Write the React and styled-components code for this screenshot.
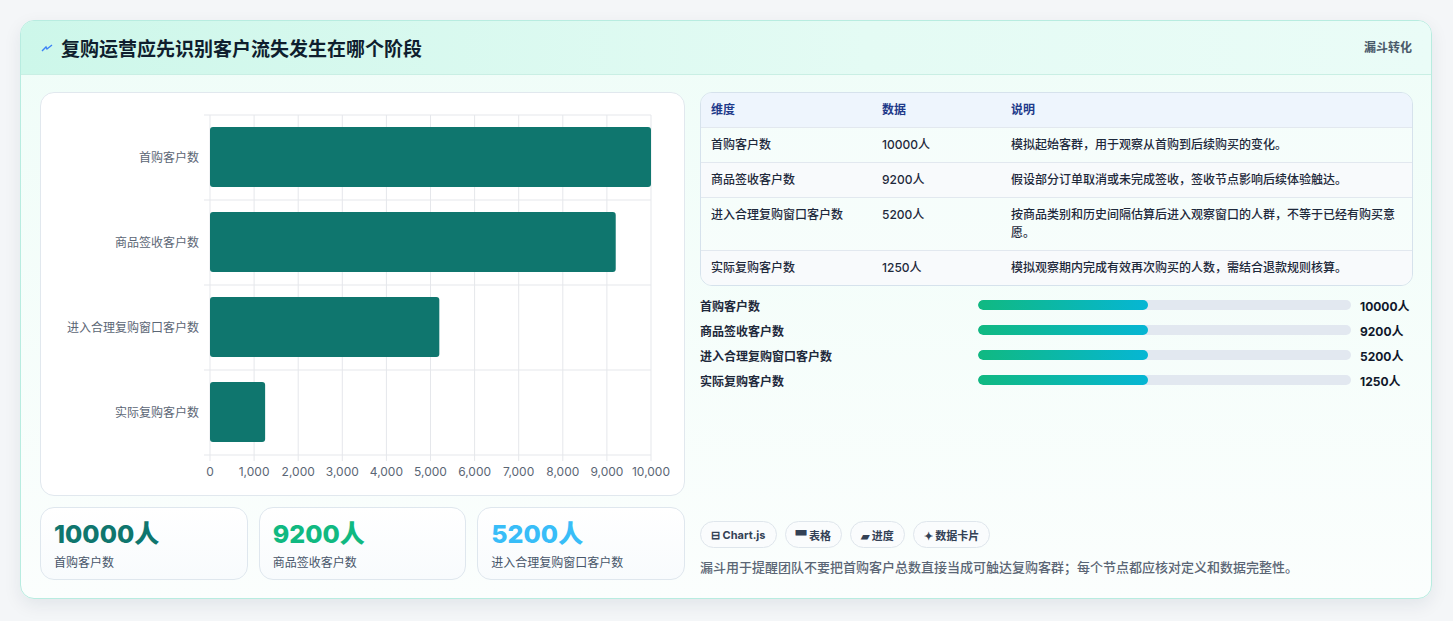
import React from 'react';
import styled, { createGlobalStyle } from 'styled-components';

const Global = createGlobalStyle`
  body { margin: 0; background: #f4f6f8; font-family: Inter, "Noto Sans CJK SC", sans-serif; }
`;

const Page = styled.div`
  padding: 20px 21px 22px 20px;
  height: 621px;
  box-sizing: border-box;
`;

const Card = styled.div`
  height: 579px;
  box-sizing: border-box;
  border: 1px solid #b8ece0;
  border-radius: 14px;
  background: linear-gradient(180deg, #effdf8 0%, #fbfefd 100%);
  box-shadow: 0 6px 18px rgba(15, 40, 60, 0.08);
  overflow: hidden;
  display: flex;
  flex-direction: column;
`;

const Header = styled.div`
  height: 55px;
  box-sizing: border-box;
  background: linear-gradient(90deg, #cdf7ea, #e4fbf4 60%, #eafcf7);
  border-bottom: 1px solid #c9efe4;
  display: flex;
  align-items: center;
  justify-content: space-between;
  padding: 0 19px 0 20px;
`;

const Title = styled.h1`
  margin: 0;
  font-size: 19px;
  font-weight: 700;
  color: #0f1e2e;
  display: flex;
  align-items: center;
  gap: 8px;
`;

const Badge = styled.span`
  font-size: 12px;
  font-weight: 700;
  color: #4a5a6a;
  align-self: flex-start;
  margin-top: 17px;
`;

const Body = styled.div`
  flex: 1;
  display: grid;
  grid-template-columns: 645px 713px;
  gap: 15px;
  padding: 17px 19px 18px 19px;
`;

const Col = styled.div`
  display: flex;
  flex-direction: column;
  gap: 11px;
`;

const ChartBox = styled.div`
  height: 404px;
  box-sizing: border-box;
  background: #fff;
  border: 1px solid #e1e8ee;
  border-radius: 14px;
`;

const Kpis = styled.div`
  display: grid;
  grid-template-columns: repeat(3, 1fr);
  gap: 11px;
`;

const Kpi = styled.div`
  height: 73px;
  box-sizing: border-box;
  border: 1px solid #dfe7ee;
  border-radius: 14px;
  background: linear-gradient(180deg, #fff, #f8fbfd);
  padding: 10px 13px;
`;

const KpiValue = styled.div`
  font-size: 25px;
  font-weight: 800;
  color: ${p => p.color};
  line-height: 32px;
`;

const KpiLabel = styled.div`
  font-size: 12px;
  color: #475569;
  margin-top: 3px;
`;

const Table = styled.div`
  border: 1px solid #d6e2ec;
  border-radius: 12px;
  overflow: hidden;
  font-size: 12px;
  color: #1e293b;
`;

const Row = styled.div`
  display: grid;
  grid-template-columns: 171px 129px 1fr;
  padding: 0 10px;
  align-items: center;
  min-height: 34px;
  border-top: ${p => (p.head ? 'none' : '1px solid #e2e8ef')};
  background: ${p => (p.head ? '#eef5fd' : p.alt ? '#f8fafc' : 'rgba(255,255,255,0.3)')};
  color: ${p => (p.head ? '#1e3a8a' : '#1e293b')};
  font-weight: ${p => (p.head ? 700 : 500)};
  line-height: 18px;
  & > span { padding: ${p => (p.tall ? '8px 0' : '0')}; align-self: ${p => (p.tall ? 'start' : 'center')}; }
`;

const Bars = styled.div`
  display: flex;
  flex-direction: column;
  gap: 7px;
  margin-top: 10px;
`;

const BarRow = styled.div`
  display: grid;
  grid-template-columns: 269px 373px 1fr;
  align-items: center;
  gap: 0 9px;
  font-size: 12px;
  font-weight: 600;
  color: #1e293b;
  height: 18px;
`;

const Track = styled.div`
  height: 10px;
  border-radius: 5px;
  background: #e2e8f0;
  overflow: hidden;
`;

const Fill = styled.div`
  height: 100%;
  border-radius: 5px;
  background: linear-gradient(90deg, #10b981, #06b6d4);
`;

const Val = styled.span`
  font-weight: 700;
  color: #0f172a;
`;

const Spacer = styled.div`
  flex: 1;
`;

const Tags = styled.div`
  display: flex;
  gap: 8px;
`;

const Tag = styled.span`
  height: 27px;
  box-sizing: border-box;
  padding: 0 10px;
  border: 1px solid #dfe6ec;
  border-radius: 14px;
  background: #fafcfd;
  font-size: 11px;
  font-weight: 700;
  color: #334155;
  display: flex;
  align-items: center;
  gap: 4px;
`;

const Note = styled.p`
  margin: 9px 0 4px;
  font-size: 13px;
  font-weight: 500;
  color: #5b6675;
`;

const data = [
  { name: '首购客户数', v: 10000, desc: '模拟起始客群，用于观察从首购到后续购买的变化。' },
  { name: '商品签收客户数', v: 9200, desc: '假设部分订单取消或未完成签收，签收节点影响后续体验触达。' },
  { name: '进入合理复购窗口客户数', v: 5200, desc: '按商品类别和历史间隔估算后进入观察窗口的人群，不等于已经有购买意愿。' },
  { name: '实际复购客户数', v: 1250, desc: '模拟观察期内完成有效再次购买的人数，需结合退款规则核算。' },
];

const Chart = () => {
  const x0 = 169, x1 = 610, y0 = 22, band = 85;
  const sx = v => x0 + ((x1 - x0) * v) / 10000;
  return (
    <svg width="643" height="402" style={{ display: 'block' }}>
      {Array.from({ length: 11 }, (_, i) => (
        <g key={i}>
          <line x1={sx(i * 1000)} x2={sx(i * 1000)} y1={y0} y2={y0 + band * 4 + 6} stroke="#e5e7eb" />
          <text x={sx(i * 1000)} y={383} fontSize="12" fill="#5b6675" textAnchor="middle" fontFamily="Inter, sans-serif">
            {i === 0 ? '0' : (i * 1000).toLocaleString('en-US')}
          </text>
        </g>
      ))}
      {[0, 1, 2, 3, 4].map(i => (
        <line key={i} x1={x0 - 6} x2={x1} y1={y0 + i * band} y2={y0 + i * band} stroke="#e5e7eb" />
      ))}
      {data.map((d, i) => (
        <g key={d.name}>
          <rect x={x0} y={y0 + i * band + 12} width={sx(d.v) - x0} height={60} rx="3" fill="#0f766e" />
          <text x={x0 - 11} y={y0 + i * band + 47} fontSize="12" fill="#5b6675" textAnchor="end" fontFamily="Inter, 'Noto Sans CJK SC', sans-serif">
            {d.name}
          </text>
        </g>
      ))}
    </svg>
  );
};

export default function App() {
  return (
    <Page>
      <Global />
      <Card>
        <Header>
          <Title>
            <svg width="12" height="12" viewBox="0 0 12 12"><path d="M1 9 L5 5 L6 7 L11 3" stroke="#3b82f6" strokeWidth="1.4" fill="none" /></svg>
            复购运营应先识别客户流失发生在哪个阶段
          </Title>
          <Badge>漏斗转化</Badge>
        </Header>
        <Body>
          <Col>
            <ChartBox><Chart /></ChartBox>
            <Kpis>
              <Kpi><KpiValue color="#0f766e">10000人</KpiValue><KpiLabel>首购客户数</KpiLabel></Kpi>
              <Kpi><KpiValue color="#10b981">9200人</KpiValue><KpiLabel>商品签收客户数</KpiLabel></Kpi>
              <Kpi><KpiValue color="#38bdf8">5200人</KpiValue><KpiLabel>进入合理复购窗口客户数</KpiLabel></Kpi>
            </Kpis>
          </Col>
          <Col style={{ gap: 0 }}>
            <Table>
              <Row head><span>维度</span><span>数据</span><span>说明</span></Row>
              {data.map((d, i) => (
                <Row key={d.name} alt={i % 2 === 1} tall={i === 2}>
                  <span>{d.name}</span><span>{d.v}人</span><span>{d.desc}</span>
                </Row>
              ))}
            </Table>
            <Bars>
              {data.map(d => (
                <BarRow key={d.name}>
                  <span>{d.name}</span>
                  <Track><Fill style={{ width: '45.5%' }} /></Track>
                  <Val>{d.v}人</Val>
                </BarRow>
              ))}
            </Bars>
            <Spacer />
            <Tags>
              <Tag>⊟ Chart.js</Tag>
              <Tag>▀ 表格</Tag>
              <Tag>▰ 进度</Tag>
              <Tag>✦ 数据卡片</Tag>
            </Tags>
            <Note>漏斗用于提醒团队不要把首购客户总数直接当成可触达复购客群；每个节点都应核对定义和数据完整性。</Note>
          </Col>
        </Body>
      </Card>
    </Page>
  );
}
